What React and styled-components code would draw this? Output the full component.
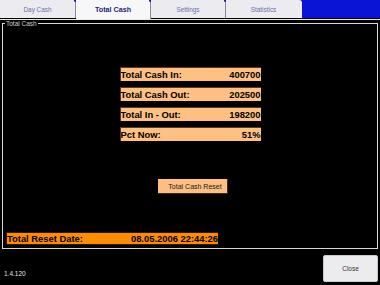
import React from "react";
import styled, { createGlobalStyle } from "styled-components";

const GlobalStyle = createGlobalStyle`
  html, body {
    margin: 0;
    padding: 0;
    background: #000;
  }
  body {
    font-family: "Liberation Sans", Arial, sans-serif;
  }
`;

const Screen = styled.div`
  width: 380px;
  height: 285px;
  background: #000;
  display: flex;
  flex-direction: column;
  overflow: hidden;
`;

const TabBar = styled.div`
  display: flex;
  height: 18px;
  background: #0a14d4;
  align-items: flex-start;
`;

const Tab = styled.div`
  position: relative;
  width: ${p => p.width || 75}px;
  height: ${p => (p.active ? 19 : 18)}px;
  box-sizing: border-box;
  background: ${p => (p.active ? "#f7f7f9" : "#ebebf0")};
  border-right: 1px solid ${p => (p.last ? "#ebebf0" : "#8a8a96")};
  border-top-right-radius: ${p => (p.last ? 3 : 0)}px;
  display: flex;
  align-items: center;
  justify-content: center;
  color: ${p => (p.active ? "#1b1f7a" : "#6a72a8")};
  font-size: ${p => (p.active ? 7.2 : 6.4)}px;
  font-weight: ${p => (p.active ? "bold" : "normal")};
  &::after {
    content: "";
    display: ${p => (p.last ? "none" : "block")};
    position: absolute;
    right: -2px;
    top: -1px;
    width: 3px;
    height: 3px;
    border-radius: 50%;
    background: #1020b0;
  }
`;

const Rule = styled.div`
  height: 1px;
  margin-top: 1px;
  background: #e8e8e8;
`;

const GroupBox = styled.div`
  position: relative;
  margin: 3px 2px 0 2px;
  padding: 0 0 3px 2px;
  height: 226px;
  box-sizing: border-box;
  border: 1px solid #d8d8d8;
  display: flex;
  flex-direction: column;
`;

const Legend = styled.span`
  position: absolute;
  top: -4px;
  left: 2px;
  background: #000;
  color: #d0d0d0;
  font-size: 6.5px;
  line-height: 7px;
  padding: 0 1px;
`;

const Stats = styled.div`
  margin-top: 43px;
  align-self: center;
  width: 141px;
  margin-left: -2px;
  display: flex;
  flex-direction: column;
  gap: 6px;
`;

const StatRow = styled.div`
  height: 14px;
  box-sizing: border-box;
  background: #ffc081;
  border-top: 1px solid #5a3a1a;
  border-left: 1px solid #5a3a1a;
  display: flex;
  justify-content: space-between;
  align-items: center;
  font-size: 9.4px;
  font-weight: bold;
  color: #000;
`;

const ResetButton = styled.button`
  margin-top: 38px;
  align-self: center;
  margin-left: 3px;
  width: 70px;
  height: 15px;
  padding: 0 0 0 6px;
  background: #ffbf80;
  border: none;
  border-right: 1px solid #3a2a1a;
  border-bottom: 1px solid #3a2a1a;
  font-family: "Liberation Sans", Arial, sans-serif;
  font-size: 7px;
  color: #1a1a1a;
`;

const DateBar = styled.div`
  margin-top: auto;
  width: 212px;
  height: 13px;
  margin-left: 1px;
  box-sizing: border-box;
  background: #ff8c00;
  border: 1px solid #2a1a00;
  border-right: none;
  display: flex;
  align-items: center;
  justify-content: space-between;
  font-size: 9.4px;
  font-weight: bold;
  color: #000;
`;

const Footer = styled.div`
  flex: 1;
  display: flex;
  justify-content: space-between;
  align-items: flex-start;
  padding: 6px 2px 0 4px;
`;

const Version = styled.div`
  margin-top: 15px;
  color: #e0e0e0;
  font-size: 6.5px;
`;

const CloseButton = styled.button`
  width: 55px;
  height: 27px;
  padding: 0;
  background: #ececef;
  border: 1px solid #c8c8cc;
  border-radius: 2px;
  font-family: "Liberation Sans", Arial, sans-serif;
  font-size: 6.5px;
  color: #333;
`;

const stats = [
  ["Total Cash In:", "400700"],
  ["Total Cash Out:", "202500"],
  ["Total In - Out:", "198200"],
  ["Pct Now:", "51%"]
];

export default function App() {
  return (
    <>
      <GlobalStyle />
      <Screen>
        <TabBar>
          <Tab width={76}>Day Cash</Tab>
          <Tab active>Total Cash</Tab>
          <Tab>Settings</Tab>
          <Tab last width={76}>Statistics</Tab>
        </TabBar>
        <Rule />
        <GroupBox>
          <Legend>Total Cash</Legend>
          <Stats>
            {stats.map(([label, value]) => (
              <StatRow key={label}>
                <span>{label}</span>
                <span>{value}</span>
              </StatRow>
            ))}
          </Stats>
          <ResetButton>Total Cash Reset</ResetButton>
          <DateBar>
            <span>Total Reset Date:</span>
            <span>08.05.2006 22:44:26</span>
          </DateBar>
        </GroupBox>
        <Footer>
          <Version>1.4.120</Version>
          <CloseButton>Close</CloseButton>
        </Footer>
      </Screen>
    </>
  );
}
